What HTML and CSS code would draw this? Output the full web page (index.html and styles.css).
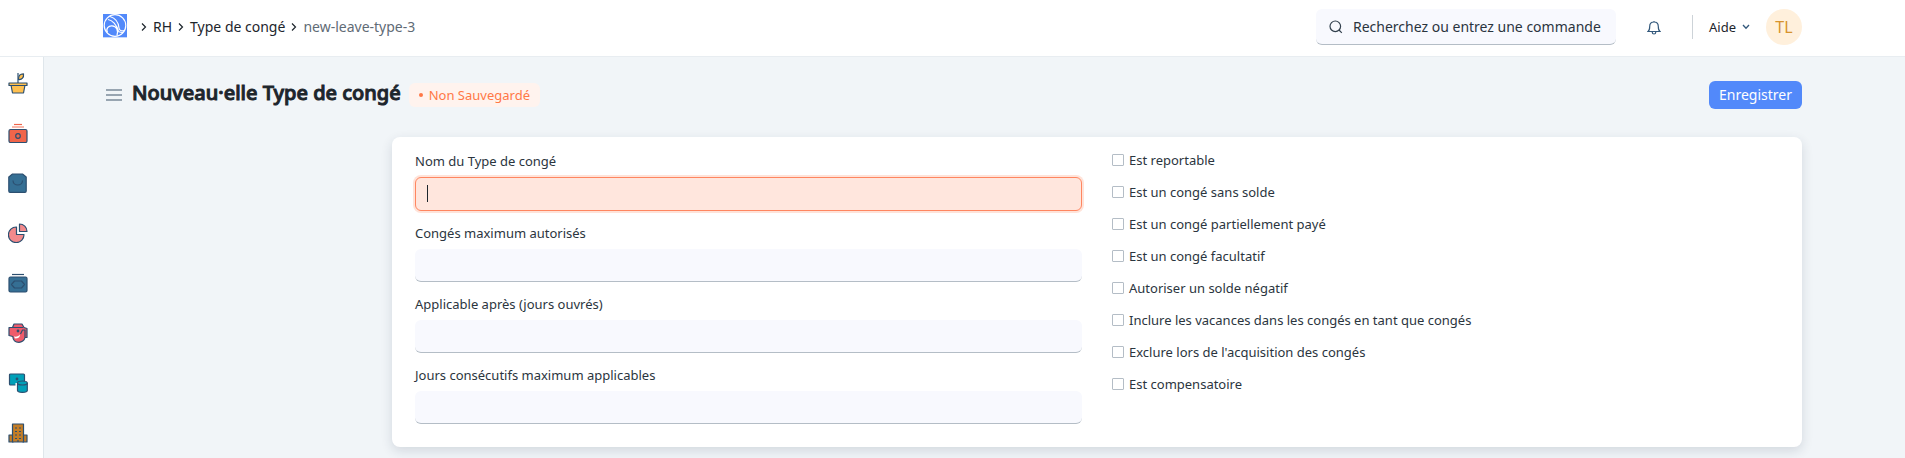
FILE: index.html
```
<!DOCTYPE html>
<html lang="fr">
<head>
<meta charset="utf-8">
<meta name="viewport" content="width=device-width, initial-scale=1">
<title>Nouveau·elle Type de congé</title>
<link rel="stylesheet" href="styles.css">
</head>
<body>
<header class="navbar">
  <div class="container navbar-inner">
    <a class="logo" href="#" aria-label="Accueil">
      <svg width="24" height="24" viewBox="0 0 24 24" fill="none" stroke="#fff" stroke-width="1.2">
        <rect width="24" height="23" y="0" fill="#5289fa" stroke="none"/>
        <rect width="24" height="1" y="23" fill="#c4d7fd" stroke="none"/>
        <circle cx="12" cy="11.500" r="10.800"/>
        <path d="M7 2.500C12 4 15.500 8.500 16 14C16.200 16.500 18.500 17.500 21.500 16.500M5 5.500C9 6 14 10.500 15.500 17.500M4.500 18.500C2.500 14.500 5.500 11.700 9 11.900C13.500 12.200 15.500 16 14 21.500M15.500 17.500C17 18.500 18.500 18.500 20 18.500"/>
      </svg>
    </a>
    <nav class="breadcrumb" aria-label="Fil d'Ariane">
      <svg class="crumb-sep" viewBox="0 0 6 10"><path d="M1 1.500L4.500 5L1 8.500"/></svg>
      <a href="#">RH</a>
      <svg class="crumb-sep" viewBox="0 0 6 10"><path d="M1 1.500L4.500 5L1 8.500"/></svg>
      <a href="#">Type de congé</a>
      <svg class="crumb-sep" viewBox="0 0 6 10"><path d="M1 1.500L4.500 5L1 8.500"/></svg>
      <a class="current" href="#">new-leave-type-3</a>
    </nav>
    <div class="search">
      <svg class="search-icon" viewBox="0 0 14 14"><circle cx="6.300" cy="6.300" r="5.300"/><path d="M10 10L12.800 12.800"/></svg>
      <input type="text" aria-label="Recherche" placeholder="Recherchez ou entrez une commande">
    </div>
    <button class="bell" aria-label="Notifications">
      <svg width="14" height="15" viewBox="0 0 14 15"><path d="M7 1V2M1 11.500H13C11.500 10.500 11.300 9.500 11.300 6.500C11.300 3.800 9.500 2 7 2C4.500 2 2.700 3.800 2.700 6.500C2.700 9.500 2.500 10.500 1 11.500ZM5.300 12V12.500C5.300 14.500 8.700 14.500 8.700 12.500V12"/></svg>
    </button>
    <span class="divider"></span>
    <button class="help">Aide
      <svg width="8" height="6" viewBox="0 0 8 6"><path d="M1 1L4 4.300L7 1"/></svg>
    </button>
    <button class="avatar">TL</button>
  </div>
</header>
<div class="layout">
  <aside class="modules">
    <a href="#" aria-label="Plante"><svg viewBox="0 0 20 22"><path fill="#ffc050" d="M3 13H17L15.500 21H4.500Z"/><path fill="#ffc050" d="M1 11H19V13.500H1Z"/><path fill="none" d="M10 11V1"/><path fill="#ffc050" d="M10.500 7.500C10.500 3.500 12 1.800 15.500 1.800C16 5.500 14 8 10.500 7.500Z"/></svg></a>
    <a href="#" aria-label="Paie"><svg viewBox="0 0 20 20"><path stroke="#f0654a" d="M6 1.500H14"/><path stroke="#f9b3a4" stroke-width="1.800" d="M4 4H16"/><rect x="1" y="6.500" width="18" height="13" rx="1.500" fill="#f0654a"/><circle cx="10" cy="13" r="2.300" fill="none"/></svg></a>
    <a href="#" aria-label="Achats"><svg viewBox="0 0 20 20"><path fill="#356f94" d="M4.500 1H14.500L18.200 4V18Q18.200 19.300 17 19.300H2Q.8 19.300 .8 18V4Z"/><path fill="none" d="M5 7.500C5 13.500 14.500 13.500 14.500 7.500"/></svg></a>
    <a href="#" aria-label="Rapports"><svg viewBox="0 0 20 20"><path fill="#f28a8c" d="M8.500 4A7.800 7.800 0 1 0 16 11.500H8.500Z"/><path fill="#f28a8c" d="M11.500 1A7.500 7.500 0 0 1 19 8.500H11.500Z"/></svg></a>
    <a href="#" aria-label="Comptabilité"><svg viewBox="0 0 20 20"><path fill="none" d="M4 1.500H16"/><rect x="1" y="4" width="18" height="15" rx="1.500" fill="#356f94"/><path fill="#356f94" d="M6.500 8H13.500L16.500 11.500L13.500 15H6.500L3.500 11.500Z"/></svg></a>
    <a href="#" aria-label="Recrutement"><svg viewBox="0 0 20 20"><path fill="#ef5b6b" d="M4.500 4.500L6 1H14L16 4.500L19 5.500V14.500H17C16.500 17.500 13.500 19.300 11 19.300C7.500 19.300 5 17 4.800 13.500L1 12.500V4.500Z"/><path fill="#fff" stroke="none" d="M6 13.500C9 14 11 13 12 11.500C12 14 10.500 15.500 7 15.500Z"/><path fill="none" d="M4.500 4.500H15M17 14.500V7H14.500L12.500 11"/><circle cx="10" cy="8" r=".8" fill="#2c4f70"/></svg></a>
    <a href="#" aria-label="Données"><svg viewBox="0 0 20 20"><rect x="1.500" y="1" width="15" height="11" rx="1" fill="#00a0b8"/><path fill="#fff" stroke="none" d="M7.500 10H10V13H7.500Z"/><circle cx="9" cy="6" r=".8" fill="#2c4f70"/><path fill="#00a0b8" d="M9.500 10V17.500C9.500 20 19.300 20 19.300 17.500V10"/><ellipse cx="14.400" cy="10" rx="4.900" ry="2" fill="#00a0b8"/></svg></a>
    <a href="#" aria-label="Société"><svg viewBox="0 0 20 20"><path fill="#c47d26" d="M1 12H5V19H1ZM15 12H19V19H15Z"/><path fill="#c47d26" d="M4.500 1H15.500V19H4.500Z"/><path fill="none" stroke-dasharray="2 2" d="M7 5H13M7 8.500H13M7 12H13M7 15.500H13"/><path fill="none" d="M10 17V19"/></svg></a>
  </aside>
  <main class="container page">
    <div class="page-head">
      <button class="menu" aria-label="Menu"><svg width="16" height="12" viewBox="0 0 16 12"><path d="M0 1H16M0 6H16M0 11H16"/></svg></button>
      <h1>Nouveau·elle Type de congé</h1>
      <span class="badge">Non Sauvegardé</span>
      <button class="save">Enregistrer</button>
    </div>
    <form class="card">
      <div class="fields">
        <div class="field required"><label for="name">Nom du Type de congé</label><input id="name" type="text"><span class="caret"></span></div>
        <div class="field"><label for="max">Congés maximum autorisés</label><input id="max" type="text"></div>
        <div class="field"><label for="after">Applicable après (jours ouvrés)</label><input id="after" type="text"></div>
        <div class="field"><label for="days">Jours consécutifs maximum applicables</label><input id="days" type="text"></div>
      </div>
      <div class="checks">
        <label><input type="checkbox">Est reportable</label>
        <label><input type="checkbox">Est un congé sans solde</label>
        <label><input type="checkbox">Est un congé partiellement payé</label>
        <label><input type="checkbox">Est un congé facultatif</label>
        <label><input type="checkbox">Autoriser un solde négatif</label>
        <label><input type="checkbox">Inclure les vacances dans les congés en tant que congés</label>
        <label><input type="checkbox">Exclure lors de l'acquisition des congés</label>
        <label><input type="checkbox">Est compensatoire</label>
      </div>
    </form>
  </main>
</div>
</body>
</html>
```
FILE: styles.css
```
* { box-sizing: border-box; }
body {
  margin: 0;
  min-height: 100vh;
  display: flex;
  flex-direction: column;
  background: #f1f5f8;
  color: #2b353e;
  font: 13px/20px "Noto Sans", sans-serif;
}
a { color: inherit; text-decoration: none; }
button { border: 0; padding: 0; background: none; font: inherit; color: inherit; }
input { font: inherit; }
svg { display: block; }
.container { width: 100%; max-width: 1699px; margin: 0 auto; }

.navbar { background: #fff; border-bottom: 1px solid #e8edf1; }
.navbar-inner { display: flex; align-items: center; height: 56px; padding-bottom: 2px; }
.logo { margin-right: 14px; padding-bottom: 2px; }
.breadcrumb { display: flex; align-items: center; gap: 6px; font-size: 14px; color: #1d252c; }
.breadcrumb .current { color: #5f6b76; }
.crumb-sep { width: 6px; height: 10px; fill: none; stroke: #1d252c; stroke-width: 1.2; }
.search {
  display: flex;
  align-items: center;
  gap: 10px;
  width: 300px;
  height: 36px;
  margin-left: auto;
  padding: 0 13px;
  border-radius: 6px;
  background: #f8f9fe;
  border-bottom: 1px solid #b4bdc6;
}
.search-icon { flex: none; width: 14px; height: 14px; fill: none; stroke: #33414e; stroke-width: 1.2; }
.search input { flex: 1; min-width: 0; border: 0; padding: 0; background: none; font-size: 14px; outline: 0; }
.search input::placeholder { color: #2b353e; opacity: 1; }
.bell { margin: 0 31px; }
.bell svg { fill: none; stroke: #33597c; stroke-width: 1.2; }
.divider { width: 1px; height: 24px; background: #cdd3d8; }
.help { display: flex; align-items: center; gap: 6px; margin: 0 16px; color: #1d252c; }
.help svg { fill: none; stroke: #33597c; stroke-width: 1.3; }
.avatar { width: 36px; height: 36px; border-radius: 50%; background: #fff0dc; color: #d6932f; font-size: 16px; }

.layout { flex: 1; position: relative; display: flex; }
.modules {
  position: absolute;
  top: 0;
  bottom: 0;
  left: 0;
  width: 44px;
  padding: 1px 0 0 8px;
  background: #fff;
  border-right: 1px solid #dfe6eb;
}
.modules a { display: flex; align-items: center; height: 50px; }
.modules svg { width: 20px; stroke: #2c4f70; stroke-width: 1.2; stroke-linejoin: round; }

.page-head { display: flex; align-items: center; height: 80px; padding-bottom: 4px; }
.menu { margin: 0 10px 0 3px; }
.menu svg { stroke: #98a5b1; stroke-width: 2; }
h1 { margin: 0 8px 4px 0; font-size: 20px; line-height: 28px; font-weight: 500; color: #1d252c; -webkit-text-stroke: 1px #1d252c; paint-order: stroke fill; }
.badge {
  display: flex;
  align-items: center;
  gap: 6px;
  height: 24px;
  padding: 0 10px;
  border-radius: 6px;
  background: #fff3ee;
  color: #ff7846;
}
.badge::before { content: ""; width: 4px; height: 4px; border-radius: 50%; background: #ff7846; }
.save { height: 28px; margin-left: auto; padding: 0 10px; border-radius: 6px; background: #5289fa; color: #fff; font-size: 14px; }

.card {
  display: grid;
  grid-template-columns: 1fr 1fr;
  gap: 30px;
  margin: 0 0 11px 289px;
  padding: 14px 23px 11px;
  border-radius: 8px;
  background: #fff;
  box-shadow: 0 4px 12px rgba(30, 45, 70, .14);
}
.field { position: relative; margin-bottom: 12px; }
.field label { display: block; margin-bottom: 6px; }
.field input {
  display: block;
  width: 100%;
  height: 33px;
  padding: 0 12px;
  border: 0;
  border-bottom: 1px solid #b4bdc6;
  border-radius: 6px;
  background: #f8f9fe;
  outline: 0;
}
.field.required input { height: 34px; border: 1px solid #ff8660; background: #ffe6dd; box-shadow: 0 0 0 2px #ffe3d9; }
.caret { position: absolute; left: 12px; bottom: 9px; width: 1px; height: 17px; background: #1d252c; }
.checks { margin-top: -1px; }
.checks label { display: flex; align-items: center; gap: 5px; height: 20px; margin-bottom: 12px; }
.checks input { appearance: none; width: 12px; height: 12px; margin: 0; border: 1px solid #b4bdc6; border-radius: 1px; background: #fff; }
```
